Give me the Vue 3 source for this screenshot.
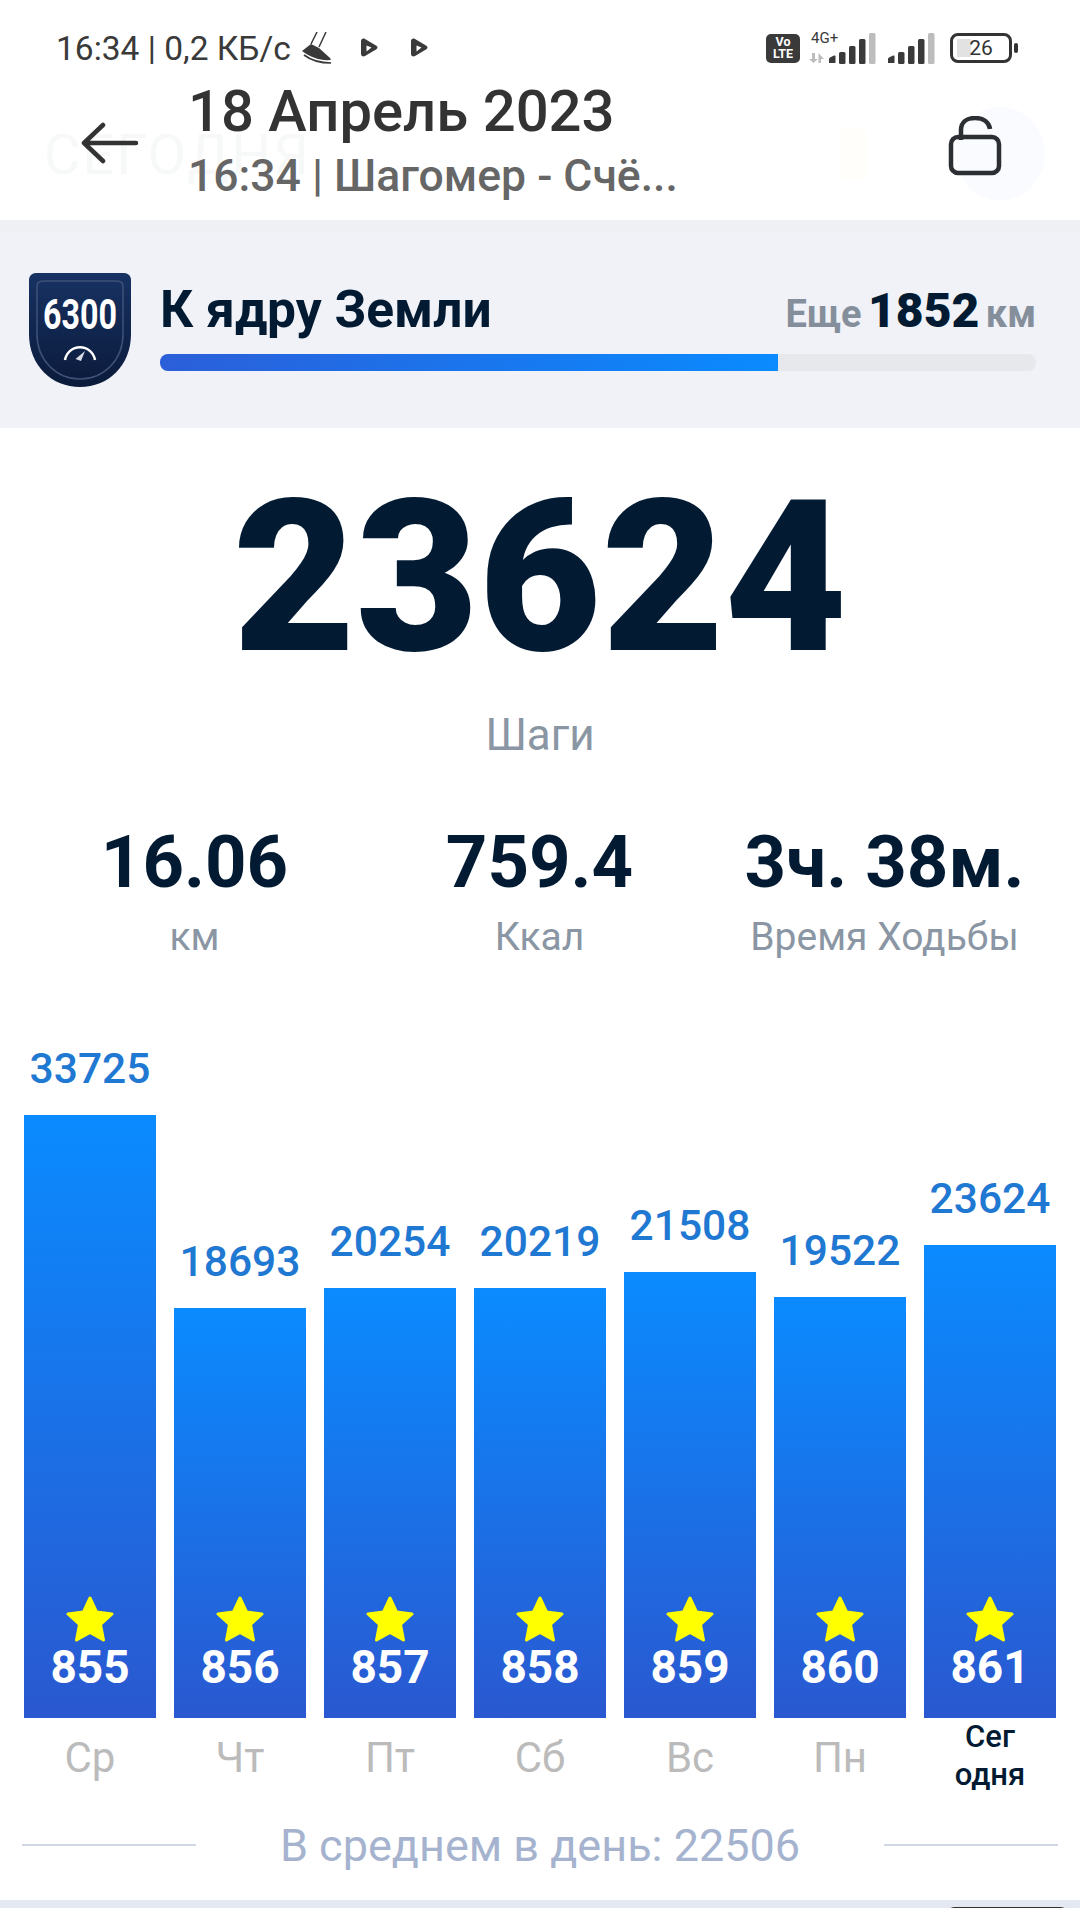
<template>
  <div class="screen">
    <header class="top">
      <div class="ghost-title">СЕГОДНЯ</div>
      <div class="ghost-cup"></div>
      <div class="ghost-circle"></div>

      <div class="status">
        <div class="status-left">
          <span class="status-text">16:34 | 0,2 КБ/с</span>
          <svg class="shoe" width="30" height="32" viewBox="0 0 30 32">
            <path d="M0 19 L9 12 L17 16 L28 26 L29 28 C18 29 8 25 0 19 Z" fill="#3a3a3a" />
            <path d="M2 23 C10 29 20 31 29 31" fill="none" stroke="#3a3a3a" stroke-width="1.6" />
            <path d="M9 12 L15 0 M17 15 L24 0" fill="none" stroke="#3a3a3a" stroke-width="1.5" />
          </svg>
          <svg class="play first" width="18" height="20" viewBox="0 0 18 20">
            <path d="M1 3 C1 1 3 0 5 1 L16 7.5 C18 9 18 10 16 11.5 L5 18 C3 19 1 18 1 16 Z" fill="#3a3a3a" />
            <path d="M6.5 7.5 L11.5 9.5 L6.5 13.5 Z" fill="#fff" />
          </svg>
          <svg class="play" width="18" height="20" viewBox="0 0 18 20">
            <path d="M1 3 C1 1 3 0 5 1 L16 7.5 C18 9 18 10 16 11.5 L5 18 C3 19 1 18 1 16 Z" fill="#3a3a3a" />
            <path d="M6.5 7.5 L11.5 9.5 L6.5 13.5 Z" fill="#fff" />
          </svg>
        </div>
        <div class="status-right">
          <div class="volte">Vo<br />LTE</div>
          <div class="net">
            <span class="net-label">4G+</span>
            <svg width="67" height="32" viewBox="0 0 67 32">
              <path d="M3 21 H6 V27 H9 L4.5 31 L0 27 H3 Z M9.5 31 V21 L15 27 H12 V31 Z" fill="#bdbdbd" />
              <path d="M20 31 V27 Q20 26 21 25.5 L25 23.5 Q26.5 23 26.5 24.5 V31 Z" fill="#3a3a3a" />
              <rect x="30" y="20" width="6.5" height="12" rx="1.5" fill="#3a3a3a" />
              <rect x="40" y="14" width="6.5" height="18" rx="1.5" fill="#3a3a3a" />
              <rect x="50" y="7" width="6.5" height="25" rx="1.5" fill="#3a3a3a" />
              <rect x="60" y="1" width="6.5" height="31" rx="1.5" fill="#bdbdbd" />
            </svg>
          </div>
          <svg class="bars2" width="48" height="32" viewBox="0 0 48 32">
            <path d="M0 31 V27 Q0 26 1 25.5 L5 23.5 Q6.5 23 6.5 24.5 V31 Z" fill="#3a3a3a" />
            <rect x="10" y="20" width="6.5" height="12" rx="1.5" fill="#3a3a3a" />
            <rect x="20" y="14" width="6.5" height="18" rx="1.5" fill="#3a3a3a" />
            <rect x="30" y="7" width="6.5" height="25" rx="1.5" fill="#3a3a3a" />
            <rect x="40" y="1" width="6.5" height="31" rx="1.5" fill="#bdbdbd" />
          </svg>
          <div class="battery">
            <div class="battery-fill"></div>
            <span>26</span>
          </div>
          <div class="battery-tip"></div>
        </div>
      </div>

      <div class="nav">
        <svg class="back" width="58" height="42" viewBox="0 0 58 42">
          <path d="M3 21 H55 M22 3 L3 21 L22 39" fill="none" stroke="#333" stroke-width="4.5" stroke-linecap="round" stroke-linejoin="round" />
        </svg>
        <div class="nav-titles">
          <div class="date">18 Апрель 2023</div>
          <div class="sub">16:34 | Шагомер - Счё...</div>
        </div>
        <svg class="lock" width="54" height="60" viewBox="0 0 54 60">
          <path d="M13 24 V14 C13 6 19 2 27 2 C35 2 41 6 42 13" fill="none" stroke="#2b2f33" stroke-width="4.5" />
          <rect x="3" y="21" width="48" height="36" rx="7" fill="none" stroke="#2b2f33" stroke-width="4.5" />
        </svg>
      </div>
    </header>

    <div class="band"></div>

    <section class="goal">
      <svg class="badge" width="104" height="116" viewBox="0 0 104 116">
        <defs>
          <linearGradient id="badgeBg" x1="0" y1="0" x2="0" y2="1">
            <stop offset="0" stop-color="#173263" />
            <stop offset="1" stop-color="#0b1a3a" />
          </linearGradient>
        </defs>
        <path d="M8 1 H96 C100 1 103 4 103 8 V62 C103 94 80 115 52 115 C24 115 1 94 1 62 V8 C1 4 4 1 8 1 Z" fill="url(#badgeBg)" />
        <path d="M15 9 H89 C93 9 95 11 95 15 V62 C95 88 76 107 52 107 C28 107 9 88 9 62 V15 C9 11 11 9 15 9 Z" fill="none" stroke="#3f5178" stroke-width="1.5" />
        <text x="52" y="57" text-anchor="middle" textLength="74" lengthAdjust="spacingAndGlyphs" class="badge-text">6300</text>
        <path d="M37 88 A15.2 15.2 0 0 1 67 88" fill="none" stroke="#fff" stroke-width="2.5" />
        <path d="M47.5 87 L57 79 L53 89 Z" fill="#d8dde8" />
      </svg>
      <div class="goal-main">
        <div class="goal-row">
          <div class="goal-title">К ядру Земли</div>
          <div class="goal-left">Еще <b>1852</b> км</div>
        </div>
        <div class="progress"><div class="progress-fill" :style="{ width: progress + '%' }"></div></div>
      </div>
    </section>

    <section class="steps">
      <div class="steps-num">23624</div>
      <div class="steps-label">Шаги</div>
    </section>

    <section class="stats">
      <div class="stat" v-for="s in stats" :key="s.label">
        <div class="stat-val">{{ s.value }}</div>
        <div class="stat-label">{{ s.label }}</div>
      </div>
    </section>

    <section class="chart">
      <div class="col" v-for="d in days" :key="d.num">
        <div class="col-val">{{ d.steps }}</div>
        <div class="bar" :style="{ height: d.h + 'px' }">
          <svg class="star" width="50" height="46" viewBox="0 0 50 46">
            <path d="M25 2 L31.5 16 L47 18 L35.5 28.5 L38.5 44 L25 36.5 L11.5 44 L14.5 28.5 L3 18 L18.5 16 Z" fill="#ffff00" stroke="#ffff00" stroke-width="3" stroke-linejoin="round" />
          </svg>
          <div class="bar-num">{{ d.num }}</div>
        </div>
      </div>
    </section>

    <section class="day-row">
      <div class="day" v-for="d in days" :key="d.num" :class="{ today: d.today }">{{ d.day }}</div>
    </section>

    <section class="avg">
      <span class="avg-line"></span>
      <span class="avg-text">В среднем в день: 22506</span>
      <span class="avg-line"></span>
    </section>

    <div class="bottom"><div class="bottom-dark"></div></div>
  </div>
</template>

<script setup>
const progress = 70.5

const stats = [
  { value: '16.06', label: 'км' },
  { value: '759.4', label: 'Ккал' },
  { value: '3ч. 38м.', label: 'Время Ходьбы' },
]

// h - высота столбика, снято с картинки
const days = [
  { steps: 33725, num: 855, day: 'Ср', h: 603 },
  { steps: 18693, num: 856, day: 'Чт', h: 410 },
  { steps: 20254, num: 857, day: 'Пт', h: 430 },
  { steps: 20219, num: 858, day: 'Сб', h: 430 },
  { steps: 21508, num: 859, day: 'Вс', h: 446 },
  { steps: 19522, num: 860, day: 'Пн', h: 421 },
  { steps: 23624, num: 861, day: 'Сег одня', h: 473, today: true },
]
</script>

<style>
html, body {
  margin: 0;
  background: #fff;
}
</style>

<style scoped>
.screen {
  width: 1080px;
  height: 1908px;
  overflow: hidden;
  background: #fff;
  font-family: Roboto, "Noto Sans", sans-serif;
  display: flex;
  flex-direction: column;
}
.top {
  position: relative;
  height: 220px;
  box-sizing: border-box;
  padding: 28px 0 0;
}
.ghost-title {
  position: absolute;
  left: 44px;
  top: 122px;
  font-size: 56px;
  color: #f7f9f9;
  letter-spacing: 2px;
}
.ghost-cup {
  position: absolute;
  left: 840px;
  top: 128px;
  width: 26px;
  height: 52px;
  background: #fffefa;
  border-radius: 3px;
}
.ghost-circle {
  position: absolute;
  left: 955px;
  top: 107px;
  width: 90px;
  height: 93px;
  border-radius: 50%;
  background: #f9fbfe;
}
.status {
  position: relative;
  height: 40px;
  display: flex;
  justify-content: space-between;
  align-items: center;
  padding: 0 62px 0 56px;
}
.status-left, .status-right {
  display: flex;
  align-items: center;
}
.status-text {
  font-size: 33.5px;
  color: #3a3a3a;
}
.shoe { margin-left: 11px; }
.play { margin-left: 32px; }
.play.first { margin-left: 28px; }
.volte {
  width: 34px;
  height: 29px;
  box-sizing: border-box;
  padding-top: 2px;
  background: #3a3a3a;
  color: #fff;
  border-radius: 5px;
  font-size: 12.5px;
  line-height: 12.5px;
  font-weight: 700;
  text-align: center;
}
.net {
  position: relative;
  margin-left: 9px;
}
.net svg, .bars2 { display: block; }
.net-label {
  position: absolute;
  left: 2px;
  top: -2px;
  font-size: 15px;
  line-height: 16px;
  color: #3a3a3a;
}
.bars2 { margin-left: 12px; }
.battery {
  position: relative;
  width: 62px;
  height: 30px;
  margin-left: 14px;
  box-sizing: border-box;
  border: 3.5px solid #333;
  border-radius: 8px;
  display: flex;
  align-items: center;
  justify-content: center;
  font-size: 21px;
  color: #333;
}
.battery span { position: relative; }
.battery-fill {
  position: absolute;
  left: 4px;
  top: 3px;
  bottom: 3px;
  width: 14px;
  background: #e2e2e2;
}
.battery-tip {
  width: 4px;
  height: 10px;
  margin-left: 2px;
  background: #333;
  border-radius: 2px;
}
.nav {
  position: relative;
  display: flex;
  align-items: center;
  margin-top: 10px;
  padding: 0 78px 0 81px;
}
.back { flex: none; margin-top: 4px; }
.nav-titles {
  flex: 1;
  margin-left: 49px;
}
.date {
  font-size: 58px;
  line-height: 66px;
  font-weight: 500;
  color: #333;
}
.sub {
  font-size: 44.5px;
  line-height: 54px;
  margin-top: 5px;
  font-weight: 500;
  color: #666;
}
.lock {
  flex: none;
  margin-top: 10px;
}
.band {
  height: 12px;
  background: #eef0f3;
}
.goal {
  height: 196px;
  box-sizing: border-box;
  background: #f0f2f7;
  display: flex;
  padding: 40px 44px 0 28px;
}
.badge { flex: none; display: block; }
.goal-main {
  flex: 1;
  margin-left: 28px;
}
.goal-row {
  display: flex;
  justify-content: space-between;
  align-items: baseline;
  height: 82px;
}
.goal-title {
  font-size: 51.5px;
  line-height: 76px;
  font-weight: 700;
  color: #021b33;
}
.goal-left {
  font-size: 38px;
  font-weight: 700;
  word-spacing: -3px;
  color: #858f9b;
}
.goal-left b {
  font-size: 48px;
  color: #021b33;
}
.badge-text {
  font-family: Roboto, sans-serif;
  font-size: 42px;
  font-weight: 700;
  fill: #fff;
}
.progress {
  height: 17px;
  background: #e6e8eb;
  border-radius: 8px;
  overflow: hidden;
}
.progress-fill {
  height: 100%;
  background: linear-gradient(90deg, #2b5fd9, #0a8bff);
}
.steps {
  text-align: center;
  padding-top: 21px;
}
.steps-num {
  font-size: 212px;
  line-height: 258px;
  font-weight: 900;
  color: #021b33;
}
.steps-label {
  font-size: 44px;
  line-height: 52px;
  color: #8a96a3;
  margin-top: 2px;
}
.stats {
  display: grid;
  grid-template-columns: repeat(3, 345px);
  padding: 60px 0 0 22px;
}
.stat { text-align: center; }
.stat-val {
  font-size: 72.5px;
  line-height: 84px;
  font-weight: 700;
  color: #021b33;
}
.stat-label {
  font-size: 39px;
  line-height: 46px;
  margin-top: 9px;
  color: #8a96a3;
}
.chart {
  height: 758px;
  display: flex;
  align-items: flex-end;
  gap: 18px;
  padding: 0 24px;
}
.col {
  flex: 1;
  text-align: center;
}
.col-val {
  font-size: 42.5px;
  line-height: 48px;
  font-weight: 500;
  color: #1f78d1;
  margin-bottom: 22px;
}
.bar {
  box-sizing: border-box;
  background: linear-gradient(180deg, #0a8bff, #2a58d0);
  display: flex;
  flex-direction: column;
  justify-content: flex-end;
  align-items: center;
  padding-bottom: 26px;
}
.star { display: block; }
.bar-num {
  font-size: 46px;
  line-height: 50px;
  font-weight: 700;
  color: #fff;
}
.day-row {
  display: grid;
  grid-template-columns: repeat(7, 1fr);
  column-gap: 18px;
  padding: 0 24px;
  height: 94px;
}
.day {
  text-align: center;
  font-size: 42px;
  line-height: 50px;
  padding-top: 15px;
  color: #bbb;
}
.day.today {
  font-size: 31px;
  line-height: 38px;
  font-weight: 500;
  padding: 0 30px;
  color: #021b33;
}
.avg {
  display: flex;
  align-items: center;
  justify-content: space-between;
  padding: 0 22px;
  height: 60px;
  margin-top: 3px;
}
.avg-line {
  width: 174px;
  height: 2px;
  background: #cfd6e4;
}
.avg-text {
  font-size: 45px;
  color: #a5b3cf;
}
.bottom {
  position: relative;
  flex: 1;
  background: #e3e8f3;
  margin-top: 25px;
}
.bottom-dark {
  position: absolute;
  left: 945px;
  right: 10px;
  top: 7px;
  height: 20px;
  background: #333;
  border-radius: 10px 10px 0 0;
}
</style>
